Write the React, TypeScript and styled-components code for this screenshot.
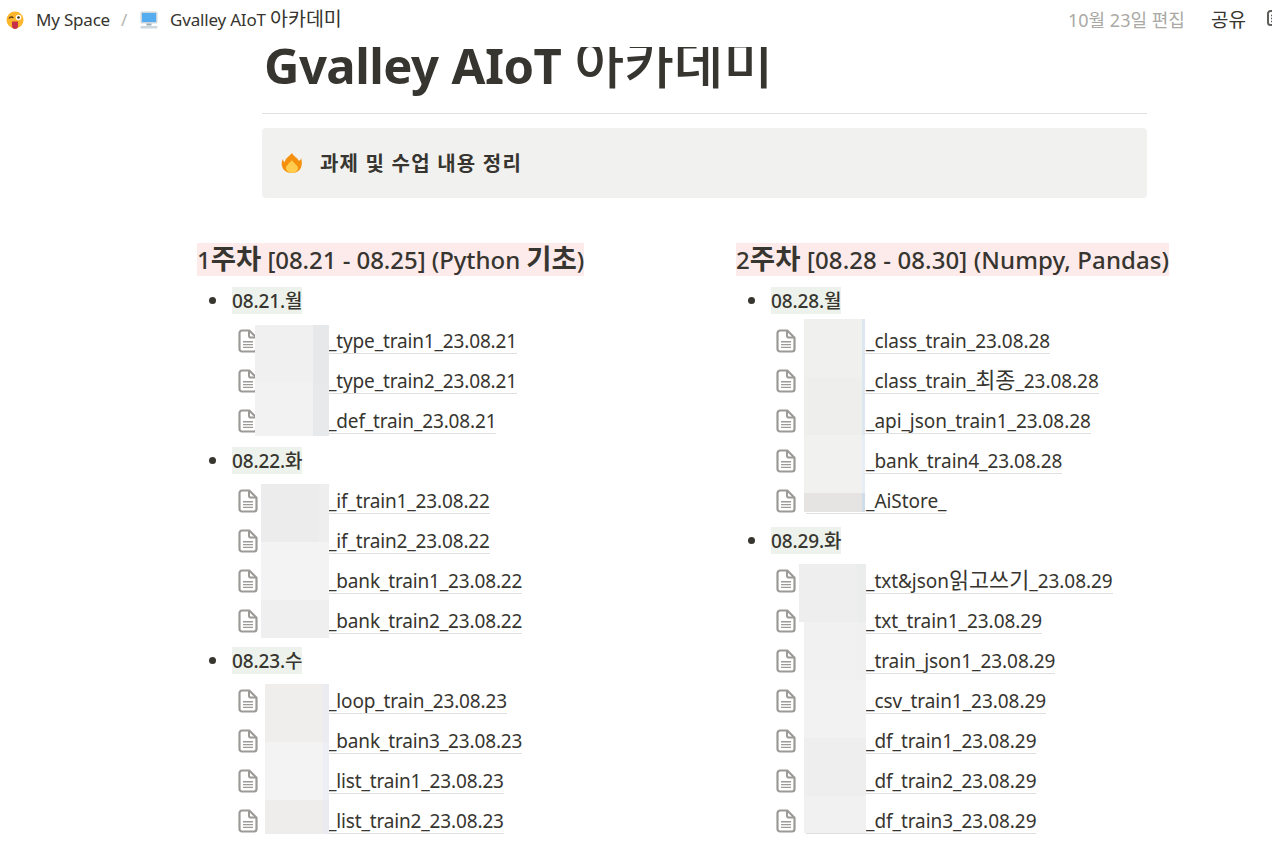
import React from "react";
import styled, { createGlobalStyle } from "styled-components";

const Global = createGlobalStyle`
  html, body { margin: 0; padding: 0; background: #fff; overflow: hidden; }
  body { font-family: "Noto Sans", "Noto Sans CJK KR", sans-serif; color: #37352f; }
`;
const Page = styled.div`
  width: 1272px; height: 846px; overflow: hidden; display: flex; flex-direction: column;
`;
const TopBar = styled.header`
  height: 47px; flex: none; background: #fff; position: relative; z-index: 2; display: flex;
  align-items: flex-start; justify-content: space-between; padding: 6px 0 0 6px; box-sizing: border-box;
  font-size: 17px; line-height: 28px; overflow: hidden;
`;
const Crumbs = styled.div`display: flex; align-items: center; letter-spacing: -0.2px;`;
const CrumbText = styled.span`color: #37352f; white-space: nowrap;`;
const Sep = styled.span`color: #b5b4b0; margin: 0 13px 0 11px;`;
const CrumbIcon = styled.svg<{ $gap: number }>`margin-right: ${(p) => p.$gap}px; flex: none;`;
const Right = styled.div`display: flex; align-items: center; width: 204px; flex: none; font-size: 18px;`;
const Edited = styled.span`color: #aaa9a5; white-space: nowrap; margin-right: 27px; width: 116px; flex: none;`;
const Share = styled.span`color: #37352f; white-space: nowrap; margin-right: 22px; width: 34px; flex: none; font-size: 19px;`;
const ChatIcon = styled.svg`flex: none; margin-top: -2px;`;
const Content = styled.main`flex: 1; min-height: 0; overflow: hidden;`;
const Head = styled.div`width: 885px; margin-left: 262px;`;
const Title = styled.h1`
  margin: -6px 0 0 2px; font-size: 49px; line-height: 44px; height: 44px; font-weight: 700;
  color: #37352f; letter-spacing: -0.55px; white-space: nowrap; word-spacing: 1px;
`;
const TitleHangul = styled.span`font-size: 54px; font-weight: 500; letter-spacing: 0;`;
const Divider = styled.hr`margin: 28px 0 14px; border: 0; height: 1px; background: #dfdfde;`;
const Callout = styled.div`
  height: 70px; background: #f1f1ef; border-radius: 4px; display: flex; align-items: center;
  padding: 0 0 1px 19px; box-sizing: border-box; font-size: 20px; font-weight: 700; gap: 17px; letter-spacing: 1.2px;
`;
const Columns = styled.div`
  display: grid; grid-template-columns: 539px 1fr; padding-left: 197px; margin-top: 42px;
`;
const WeekTitle = styled.h2<{ $track: number }>`
  margin: 0; height: 41px; font-size: 24px; line-height: 39px; font-weight: 500; white-space: nowrap; letter-spacing: ${(p) => p.$track}px;
`;
const WeekMark = styled.span`background: #fdebec;`;
const WeekHangul = styled.span`font-size: 27.5px; font-weight: 700; line-height: 1;`;
const Day = styled.div`
  height: 40px; display: flex; align-items: center; padding: 0 0 2px 35px; box-sizing: border-box; position: relative; font-size: 19px;
  &::before { content: ""; position: absolute; left: 11.5px; top: 16px; width: 7px; height: 7px; border-radius: 50%; background: #37352f; }
`;
const DayMark = styled.span`
  background: #edf3ec; font-weight: 500; line-height: 29px; height: 27px; letter-spacing: -0.15px;
`;
const Row = styled.div<{ $indent: number }>`
  height: 40px; display: flex; align-items: center; padding-left: ${(p) => p.$indent}px; position: relative; font-size: 19px;
`;
const FileIcon = styled.svg`flex: none; width: 20px; height: 24px; margin: 0 10px 1px 0;`;
const LinkText = styled.span<{ $pad: number; $track: number }>`
  display: inline-block; line-height: 27px; height: 26px; box-sizing: border-box; border-bottom: 1px solid #dfdfde;
  white-space: nowrap; padding-left: ${(p) => p.$pad}px; letter-spacing: ${(p) => p.$track}px; color: #37352f;
`;
const LinkHangul = styled.span`font-size: 1.15em; letter-spacing: 0; line-height: 0;`;
const Redaction = styled.div<{ $l: number; $w: number; $t: number; $h: number; $c: string; $e: string; $edge: number }>`
  position: absolute; z-index: 1; left: ${(p) => p.$l}px; width: ${(p) => p.$w}px; top: ${(p) => p.$t}px; height: ${(p) => p.$h}px;
  background: linear-gradient(to right, ${(p) => p.$c} 0 calc(100% - ${(p) => p.$edge}px), ${(p) => p.$e} calc(100% - ${(p) => p.$edge}px) 100%);
`;

const File = () => (
  <FileIcon viewBox="0 0 20 24" fill="none">
    <path d="M4 1.500h7.300L18.500 8.700v11.300a2.500 2.500 0 0 1-2.500 2.500H4A2.500 2.500 0 0 1 1.500 20V4A2.500 2.500 0 0 1 4 1.500z" stroke="#9b9a97" strokeWidth="2.200" strokeLinejoin="round" />
    <path d="M11 2V6.800a1.800 1.800 0 0 0 1.800 1.800H18" stroke="#9b9a97" strokeWidth="2" />
    <path d="M5 12.800h10M5 15.600h10M5 18.400h10" stroke="#9b9a97" strokeWidth="1.400" />
  </FileIcon>
);

const splitHangul = (text: string, H: React.ElementType) =>
  text.split(/([가-힣]+)/).map((part, i) => (/[가-힣]/.test(part) ? <H key={i}>{part}</H> : part));

type Patch = { l: number; w: number; t: number; h: number; c: string; e: string; edge: number };
type RowT = { text: string; patch?: Patch };
type Group = { day: string; rows: RowT[] };
type Week = { label: string; labelTrack: number; indent: number; pad: number; track: number; groups: Group[] };

const weeks: Week[] = [
  {
    label: "1주차 [08.21 - 08.25] (Python 기초)", labelTrack: -0.05, indent: 41, pad: 60, track: -0.15,
    groups: [
      { day: "08.21.월", rows: [
        { text: "_type_train1_23.08.21", patch: { l: 58, w: 74, t: 4, h: 58, c: "#f0f0f0", e: "#e7e8ea", edge: 16 } },
        { text: "_type_train2_23.08.21", patch: { l: 58, w: 74, t: 22, h: 53, c: "#f2f2f2", e: "#e8e9eb", edge: 16 } },
        { text: "_def_train_23.08.21" },
      ]},
      { day: "08.22.화", rows: [
        { text: "_if_train1_23.08.22", patch: { l: 64, w: 68, t: 3, h: 58, c: "#ececec", e: "#eeeeee", edge: 10 } },
        { text: "_if_train2_23.08.22", patch: { l: 64, w: 68, t: 21, h: 58, c: "#f3f3f3", e: "#f3f3f3", edge: 10 } },
        { text: "_bank_train1_23.08.22" },
        { text: "_bank_train2_23.08.22", patch: { l: 64, w: 68, t: -1, h: 38, c: "#efefef", e: "#efefef", edge: 10 } },
      ]},
      { day: "08.23.수", rows: [
        { text: "_loop_train_23.08.23", patch: { l: 68, w: 64, t: 3, h: 58, c: "#efeeed", e: "#ebecf2", edge: 6 } },
        { text: "_bank_train3_23.08.23", patch: { l: 68, w: 64, t: 21, h: 58, c: "#f3f3f4", e: "#eeeff5", edge: 6 } },
        { text: "_list_train1_23.08.23" },
        { text: "_list_train2_23.08.23", patch: { l: 68, w: 64, t: -1, h: 34, c: "#eeedec", e: "#eaebf1", edge: 6 } },
      ]},
    ],
  },
  {
    label: "2주차 [08.28 - 08.30] (Numpy, Pandas)", labelTrack: 0.1, indent: 40, pad: 60, track: -0.05,
    groups: [
      { day: "08.28.월", rows: [
        { text: "_class_train_23.08.28", patch: { l: 68, w: 61, t: -2, h: 58, c: "#f0f0ef", e: "#dde7f1", edge: 3 } },
        { text: "_class_train_최종_23.08.28", patch: { l: 68, w: 61, t: 16, h: 58, c: "#eeeeed", e: "#dde7f1", edge: 3 } },
        { text: "_api_json_train1_23.08.28" },
        { text: "_bank_train4_23.08.28", patch: { l: 68, w: 61, t: -6, h: 58, c: "#f1f1f0", e: "#e6edf5", edge: 3 } },
        { text: "_AiStore_", patch: { l: 68, w: 61, t: 12, h: 19, c: "#e5e4e2", e: "#cfdcea", edge: 3 } },
      ]},
      { day: "08.29.화", rows: [
        { text: "_txt&json읽고쓰기_23.08.29", patch: { l: 63, w: 67, t: 3, h: 58, c: "#eeeeee", e: "#ebecec", edge: 9 } },
        { text: "_txt_train1_23.08.29", patch: { l: 68, w: 62, t: 21, h: 58, c: "#f1f1f1", e: "#f0f0f0", edge: 9 } },
        { text: "_train_json1_23.08.29" },
        { text: "_csv_train1_23.08.29", patch: { l: 68, w: 62, t: -1, h: 58, c: "#f2f2f2", e: "#f2f2f2", edge: 9 } },
        { text: "_df_train1_23.08.29", patch: { l: 68, w: 62, t: 17, h: 58, c: "#eeeeee", e: "#eeeeee", edge: 9 } },
        { text: "_df_train2_23.08.29" },
        { text: "_df_train3_23.08.29", patch: { l: 68, w: 62, t: -5, h: 37, c: "#f1f1f1", e: "#f1f1f1", edge: 9 } },
      ]},
    ],
  },
];

const App = () => (
  <Page>
    <Global />
    <TopBar>
      <Crumbs>
        <CrumbIcon $gap={12} width="18" height="18" viewBox="0 0 18 18">
          <circle cx="9" cy="9" r="8.500" fill="#fbb62b" />
          <path d="M3 7.500c1-1.500 3-1.800 4.500-.8" stroke="#5b3a1a" strokeWidth="1.300" fill="none" />
          <circle cx="12.500" cy="6.500" r="2.800" fill="#fff" /><circle cx="12.500" cy="6.500" r="1.300" fill="#3f2a12" />
          <path d="M6 10.500h6v4.500a3 3 0 0 1-6 0z" fill="#c8304a" />
        </CrumbIcon>
        <CrumbText>My Space</CrumbText>
        <Sep>/</Sep>
        <CrumbIcon $gap={12} width="18" height="18" viewBox="0 0 18 18">
          <rect x="0.500" y="0.500" width="17" height="12" rx="1.500" fill="#ccd6dd" />
          <rect x="2" y="2" width="14" height="9" fill="#55acee" />
          <rect x="6.500" y="12.500" width="5" height="2" fill="#99aab5" />
          <rect x="0.500" y="15" width="17" height="2.500" rx="1" fill="#ccd6dd" />
        </CrumbIcon>
        <CrumbText>Gvalley AIoT {splitHangul("아카데미", LinkHangul)}</CrumbText>
      </Crumbs>
      <Right>
        <Edited>10월 23일 편집</Edited>
        <Share>공유</Share>
        <ChatIcon width="20" height="20" viewBox="0 0 20 20" fill="none">
          <path d="M3.500 2h13A2.500 2.500 0 0 1 19 4.500v9a2.500 2.500 0 0 1-2.500 2.500H11l-3 3v-3H3.500A2.500 2.500 0 0 1 1 13.500v-9A2.500 2.500 0 0 1 3.500 2z" stroke="#5f5e5b" strokeWidth="2" />
          <path d="M4 6.500h2M4 9.500h2M4 12.500h2" stroke="#5f5e5b" strokeWidth="1.500" />
        </ChatIcon>
      </Right>
    </TopBar>
    <Content>
      <Head>
        <Title>Gvalley AIoT {splitHangul("아카데미", TitleHangul)}</Title>
        <Divider />
        <Callout>
          <svg width="22" height="22" viewBox="0 0 22 22">
            <path d="M11 1c1 3 5 4 7 8 2-1 2-3 2-3 2 5 1 15-9 15S-1 12 2 7c0 2 1 3 2 3 0-4 4-5 7-9z" fill="#f4900c" />
            <path d="M11 8c1 3 6 5 6 8a6 5 0 0 1-12 0c0-2 1-3 2-3 0-2 3-3 4-5z" fill="#ffcc4d" />
          </svg>
          과제 및 수업 내용 정리
        </Callout>
      </Head>
      <Columns>
        {weeks.map((w) => (
          <section key={w.label}>
            <WeekTitle $track={w.labelTrack}>
              <WeekMark>{splitHangul(w.label, WeekHangul)}</WeekMark>
            </WeekTitle>
            {w.groups.map((g) => (
              <div key={g.day}>
                <Day><DayMark>{g.day}</DayMark></Day>
                {g.rows.map((r) => (
                  <Row key={r.text} $indent={w.indent}>
                    <File />
                    <LinkText $pad={w.pad} $track={w.track}>{splitHangul(r.text, LinkHangul)}</LinkText>
                    {r.patch && <Redaction $l={r.patch.l} $w={r.patch.w} $t={r.patch.t} $h={r.patch.h} $c={r.patch.c} $e={r.patch.e} $edge={r.patch.edge} />}
                  </Row>
                ))}
              </div>
            ))}
          </section>
        ))}
      </Columns>
    </Content>
  </Page>
);

export default App;
